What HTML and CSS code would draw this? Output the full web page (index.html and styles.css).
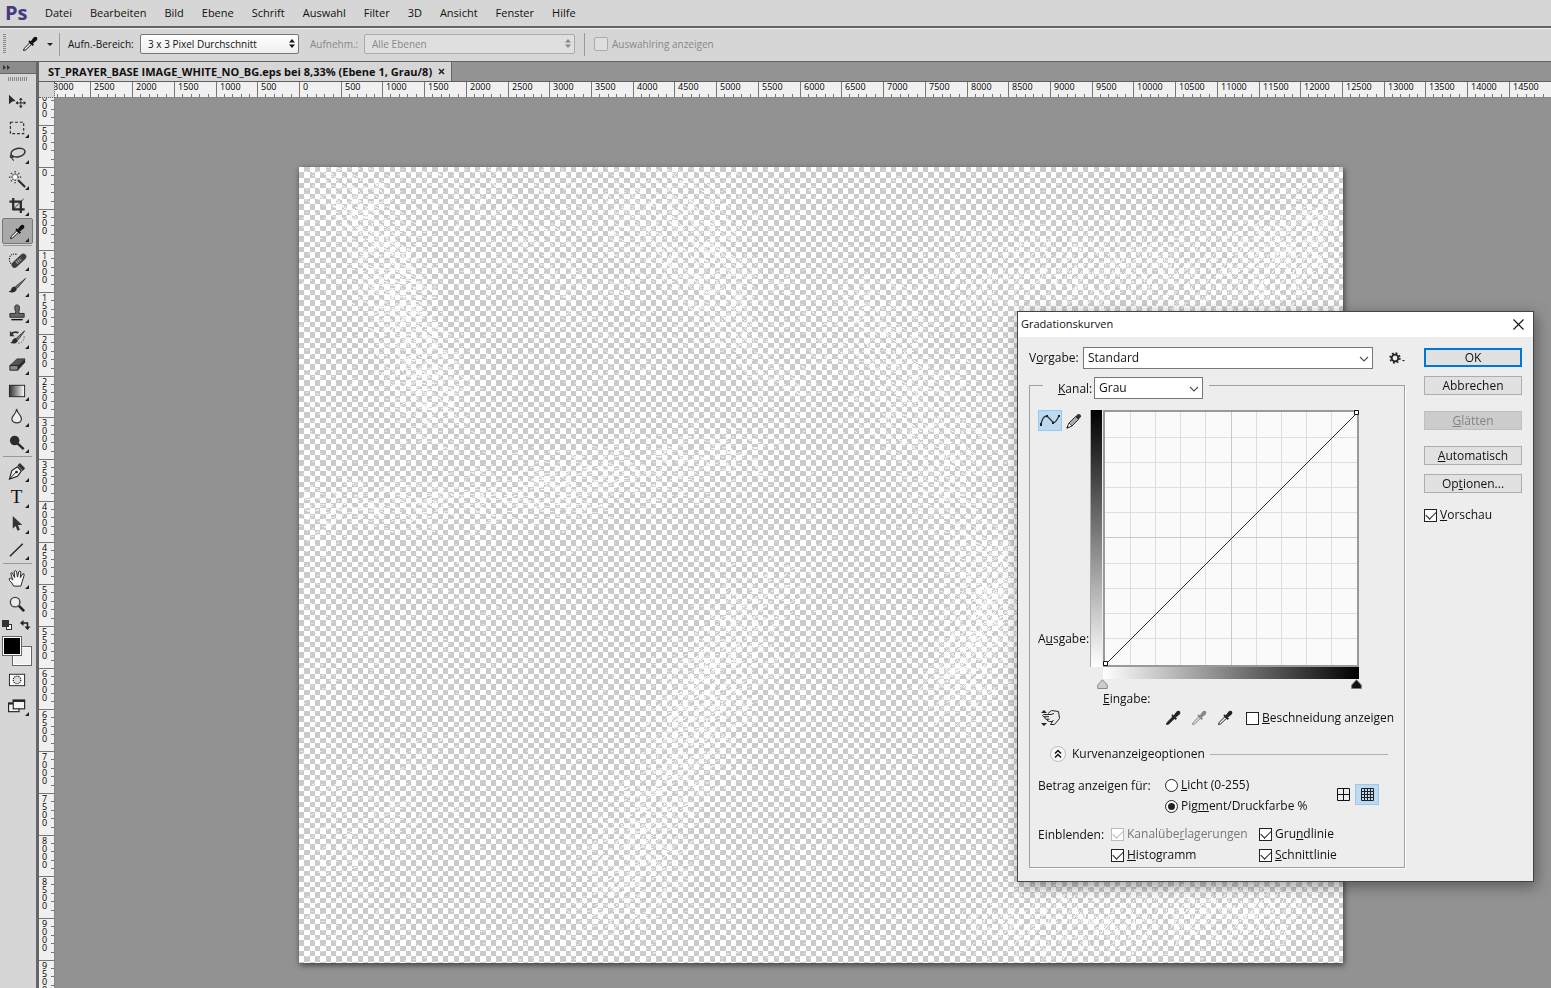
FILE: index.html
```
<!DOCTYPE html>
<html lang="de">
<head>
    <meta charset="utf-8">
    <title>ST_PRAYER_BASE IMAGE_WHITE_NO_BG.eps</title>
    <link rel="stylesheet" href="styles.css">
</head>
<body>
    <!-- Symbole, die mehrfach vorkommen -->
    <svg class="defs" width="0" height="0">
        <symbol id="pipette" viewBox="0 0 16 16">
            <path d="M1.5 14.5 L2.2 12.4 L8 6.6 L9.6 8.2 L3.7 13.9 Z" fill="var(--tube, #f4f4f4)" stroke="currentColor" stroke-width="1"/>
            <path d="M7 5 L11.3 9.3" stroke="currentColor" stroke-width="2"/>
            <path d="M8.6 5.4 L11.6 1.6 Q13.2 0.2 14.9 1.3 Q16 3 14.6 4.5 L10.8 7.6 Z" fill="currentColor"/>
        </symbol>
        <symbol id="chevron" viewBox="0 0 10 6">
            <path d="M1 1 L5 5 L9 1" fill="none" stroke="#555" stroke-width="1.2"/>
        </symbol>
        <symbol id="updown" viewBox="0 0 6 9">
            <path d="M3 0 L6 3.5 H0 Z M3 9 L0 5.5 H6 Z" fill="currentColor"/>
        </symbol>
    </svg>

    <nav class="menubar">
        <span class="logo">Ps</span>
        <a href="#">Datei</a>
        <a href="#">Bearbeiten</a>
        <a href="#">Bild</a>
        <a href="#">Ebene</a>
        <a href="#">Schrift</a>
        <a href="#">Auswahl</a>
        <a href="#">Filter</a>
        <a href="#">3D</a>
        <a href="#">Ansicht</a>
        <a href="#">Fenster</a>
        <a href="#">Hilfe</a>
    </nav>

    <div class="options">
        <span class="grip"></span>
        <button class="current-tool" aria-label="Pipette">
            <svg width="16" height="16"><use href="#pipette"/></svg>
            <svg width="6" height="3"><path d="M0 0 H6 L3 3 Z" fill="#222"/></svg>
        </button>
        <label class="option option-area">Aufn.-Bereich:
            <span class="select">
                <select><option>3 x 3 Pixel Durchschnitt</option></select>
                <svg width="6" height="9"><use href="#updown"/></svg>
            </span>
        </label>
        <label class="option option-layers disabled">Aufnehm.:
            <span class="select">
                <select disabled><option>Alle Ebenen</option></select>
                <svg width="6" height="9"><use href="#updown"/></svg>
            </span>
        </label>
        <label class="option option-ring disabled"><input type="checkbox" disabled>Auswahlring anzeigen</label>
    </div>

    <div class="main">
        <aside class="toolbox">
            <div class="toolbox-head">
                <svg width="8" height="5"><path d="M0 0 L3 2.5 L0 5 Z M4 0 L7 2.5 L4 5 Z" fill="#333"/></svg>
            </div>
            <div class="toolbox-grip"></div>
            <div class="tools">
                <button class="tool single" aria-label="Verschieben">
                    <svg viewBox="0 0 20 20"><path d="M1 3 L8 9.5 L4.5 10 L1 13 Z" fill="#2b2b2b"/><path d="M13.500 6.500 V16 M8.500 11.500 H18.500" stroke="#2b2b2b"/><path d="M13.500 6 L11.500 8.500 H15.500 Z M13.500 17 L11.500 14.500 H15.500 Z M8 11.500 L10.500 9.500 V13.500 Z M19 11.500 L16.500 9.500 V13.500 Z" fill="#2b2b2b"/></svg>
                </button>
                <button class="tool" aria-label="Auswahlrechteck">
                    <svg viewBox="0 0 20 20"><rect x="2.500" y="4.500" width="14" height="12" fill="none" stroke="#2b2b2b" stroke-width="1.200" stroke-dasharray="3 2"/></svg>
                </button>
                <button class="tool" aria-label="Lasso">
                    <svg viewBox="0 0 20 20"><ellipse cx="10.500" cy="9" rx="7.500" ry="4.500" fill="none" stroke="#333" stroke-width="1.600" transform="rotate(-12 11 9)"/><path d="M4 11 Q1 13 3.500 14.500 Q6.500 14 5 12.500 Q3.500 13 4.500 15.500 L6 17.500" fill="none" stroke="#333" stroke-width="1.200"/></svg>
                </button>
                <button class="tool" aria-label="Zauberstab">
                    <svg viewBox="0 0 20 20"><path d="M7.500 1 V5 M7.500 10 V14 M1 7.500 H5 M10 7.500 H14 M3 3 L6 6 M12 3 L9 6 M3 12 L6 9" stroke="#333" stroke-width="1.300" stroke-dasharray="1.500 1"/><circle cx="7.500" cy="7.500" r="2.700" fill="#fff" stroke="#555" stroke-dasharray="1.500 1"/><path d="M10.500 10.500 L18 18" stroke="#2b2b2b" stroke-width="2.200"/></svg>
                </button>
                <button class="tool" aria-label="Freistellen">
                    <svg viewBox="0 0 20 20"><path d="M5.500 2 V14 H17.500 M1.500 6 H13.500 V18" fill="none" stroke="#2b2b2b" stroke-width="2.400"/><path d="M6 13.500 L16.500 3" stroke="#2b2b2b"/></svg>
                </button>
                <button class="tool active" aria-label="Pipette">
                    <svg viewBox="-1 -2 19 19"><use href="#pipette" width="16" height="16"/></svg>
                </button>
                <hr>
                <button class="tool" aria-label="Bereichsreparatur">
                    <svg viewBox="0 0 20 20"><path d="M9 3.500 Q1.500 2 1.500 8.500 Q1.500 13 5 14.500" fill="none" stroke="#222" stroke-width="1.200" stroke-dasharray="1.200 1.200"/><path d="M7 14.500 L16 6" stroke="#3d3d3d" stroke-width="6.500" stroke-linecap="round"/><path d="M9 12.500 L14 8" stroke="#bbb" stroke-width="3.500" stroke-dasharray="1 1.200"/></svg>
                </button>
                <button class="tool" aria-label="Pinsel">
                    <svg viewBox="0 0 20 20"><path d="M18.500 1.500 L10 11.500 L8 10 Z" fill="#777" stroke="#222" stroke-width=".8"/><path d="M9.500 12.500 L7.500 10 Q4 10 3.500 13 Q3 15 0.500 15.500 Q7 18 9.500 12.500 Z" fill="#2b2b2b"/></svg>
                </button>
                <button class="tool" aria-label="Stempel">
                    <svg viewBox="0 0 20 20"><path d="M8 9 Q5.500 2 9.500 2 Q13.500 2 11.500 9 V11 H17 V15 H2 V11 H8 Z" fill="#666" stroke="#2b2b2b"/><path d="M3.500 17.500 H15.500" stroke="#111" stroke-width="1.500"/></svg>
                </button>
                <button class="tool" aria-label="Protokollpinsel">
                    <svg viewBox="0 0 20 20"><path d="M17.500 2 L11 11 L9 9.500 Z" fill="#888" stroke="#222" stroke-width=".8"/><path d="M10.500 12 L8.500 9.500 Q5 10 4.500 12.500 Q4 14 2 14.500 Q8 17 10.500 12 Z" fill="#2b2b2b"/><path d="M3 5 Q7 2 11 4" fill="none" stroke="#333" stroke-width="1.800"/><path d="M2 2 V7.500 H7 Z" fill="#333"/><path d="M17 8 Q17 14 11 15" fill="none" stroke="#222" stroke-dasharray="1 2"/></svg>
                </button>
                <button class="tool" aria-label="Radiergummi">
                    <svg viewBox="0 0 20 20"><path d="M2 11 L9.500 4 H18 L10.500 11 Z" fill="#555" stroke="#222" stroke-width=".6"/><path d="M10.500 11 L18 4 V8 L10.500 16 Z" fill="#2b2b2b"/><path d="M2 11 H10.500 V16 H2 Z" fill="#888" stroke="#222"/></svg>
                </button>
                <button class="tool" aria-label="Verlauf">
                    <svg viewBox="0 0 20 20"><defs><linearGradient id="verlauf"><stop offset="0" stop-color="#333"/><stop offset="1" stop-color="#fff"/></linearGradient></defs><rect x="1.500" y="4.500" width="16" height="12" fill="url(#verlauf)" stroke="#222"/></svg>
                </button>
                <button class="tool" aria-label="Weichzeichner">
                    <svg viewBox="0 0 20 20"><path d="M9 2 Q9 5 6 8.500 Q2.500 13 5.500 15.500 Q9.500 18 13 15.500 Q15.500 12.500 12.500 8.500 Q9.500 5 9 2 Z" fill="#eee" stroke="#333" stroke-width="1.200"/></svg>
                </button>
                <button class="tool" aria-label="Abwedler">
                    <svg viewBox="0 0 20 20"><circle cx="7" cy="8" r="5" fill="#2b2b2b"/><path d="M10 11 L16.500 17" stroke="#2b2b2b" stroke-width="2.600"/></svg>
                </button>
                <hr>
                <button class="tool" aria-label="Zeichenstift">
                    <svg viewBox="0 0 20 20"><path d="M1.500 18 L4 9 L10 5 L14 9.500 L10 15 Z" fill="#f0f0f0" stroke="#222" stroke-width="1.200"/><path d="M2 17.500 L8.500 10.500" stroke="#222"/><circle cx="9" cy="10.500" r="1.400" fill="#222"/><path d="M10 3.500 L12.500 1 L18 6.500 L15.500 9.500 Z" fill="#333"/></svg>
                </button>
                <button class="tool letter" aria-label="Text">T</button>
                <button class="tool" aria-label="Pfadauswahl">
                    <svg viewBox="0 0 20 20"><path d="M5 2 V15.500 L8 12.500 L10 17.500 L12.500 16.500 L10.500 11.500 H15 Z" fill="#333"/></svg>
                </button>
                <button class="tool" aria-label="Linie">
                    <svg viewBox="0 0 20 20"><path d="M2 17 L15.500 4" stroke="#222" stroke-width="1.500"/></svg>
                </button>
                <hr>
                <button class="tool" aria-label="Hand">
                    <svg viewBox="0 0 20 20"><path d="M6 18 Q4.500 14.500 1.500 12 Q.5 9.500 2.500 9.500 L5 11.500 L3 5 Q3 3.500 4.500 4 L7 9 L6.500 2.500 Q7.500 1 9 2.500 L10 8.500 L11.500 2.500 Q12.500 1.500 13.500 3 L13 9 L15.500 5 Q17.500 4.500 17 6.500 L15 13 L13.500 18 Z" fill="#f6f6f6" stroke="#222"/></svg>
                </button>
                <button class="tool single" aria-label="Zoom">
                    <svg viewBox="0 0 20 20"><circle cx="7.500" cy="7.500" r="5" fill="#ececec" stroke="#444" stroke-width="1.500"/><path d="M11.500 11.500 L17 17" stroke="#222" stroke-width="2.800"/></svg>
                </button>
            </div>
            <div class="swap">
                <svg width="10" height="10"><rect x="4.500" y="4.500" width="5" height="5" fill="#fff" stroke="#333"/><rect x="0" y="0" width="7" height="7" fill="#333"/></svg>
                <svg width="11" height="10"><path d="M2 3 H7.500 V8" fill="none" stroke="#222" stroke-width="1.500"/><path d="M3.500 0 V6 L0 3 Z M4.500 6.500 H10.500 L7.500 10 Z" fill="#222"/></svg>
            </div>
            <div class="swatches"><span class="swatch back"></span><span class="swatch front"></span></div>
            <div class="tools">
                <button class="tool single" aria-label="Maskierungsmodus">
                    <svg viewBox="0 0 20 20"><rect x="1.500" y="4.500" width="16" height="12" fill="#fff" stroke="#222"/><circle cx="9.500" cy="10.500" r="4" fill="#ddd" stroke="#111" stroke-width="1.200" stroke-dasharray="1.200 1"/></svg>
                </button>
                <button class="tool" aria-label="Bildschirmmodus">
                    <svg viewBox="0 0 20 20"><rect x=".6" y="7.500" width="11" height="9" fill="#f4f4f4" stroke="#222" stroke-width="1.200"/><path d="M0 8 H6" stroke="#222" stroke-width="2"/><rect x="5.500" y="4.500" width="12" height="9" fill="#f4f4f4" stroke="#222" stroke-width="1.200"/><path d="M5 5 H18" stroke="#222" stroke-width="2.500"/></svg>
                </button>
            </div>
        </aside>

        <section class="document">
            <div class="tabs">
                <div class="tab">ST_PRAYER_BASE IMAGE_WHITE_NO_BG.eps bei 8,33% (Ebene 1, Grau/8)
                    <button aria-label="Schließen"><svg width="7" height="7"><path d="M1 1 L6 6 M6 1 L1 6" stroke="#222" stroke-width="1.500"/></svg></button>
                </div>
            </div>
            <div class="view">
                <div class="ruler-corner"></div>
                <div class="ruler ruler-x" id="rulerX"></div>
                <div class="ruler ruler-y" id="rulerY"></div>
                <div class="pasteboard">
                    <canvas class="artboard" id="artboard" width="1044" height="796"></canvas>
                </div>
            </div>
        </section>
    </div>

    <form class="dialog" role="dialog" aria-label="Gradationskurven">
        <header class="dialog-title">Gradationskurven
            <button type="button" aria-label="Schließen"><svg width="11" height="11"><path d="M.5 .5 L10.500 10.500 M10.500 .5 L.5 10.500" stroke="#111" stroke-width="1.100"/></svg></button>
        </header>
        <div class="dialog-body">
            <div class="settings">
                <div class="preset">
                    <label for="preset">V<u>o</u>rgabe:</label>
                    <span class="combo">
                        <select id="preset"><option>Standard</option></select>
                        <svg width="10" height="6"><use href="#chevron"/></svg>
                    </span>
                    <button type="button" class="gear" aria-label="Vorgabenoptionen">
                        <svg width="16" height="12"><circle cx="6" cy="6" r="3.300" fill="none" stroke="#222" stroke-width="1.800"/><circle cx="6" cy="6" r="4.900" fill="none" stroke="#222" stroke-width="1.600" stroke-dasharray="1.900 1.950"/><path d="M13 8 H16 L14.500 9.500 Z" fill="#222"/></svg>
                    </button>
                </div>
                <fieldset>
                    <legend>
                        <label for="channel"><u>K</u>anal:</label>
                        <span class="combo">
                            <select id="channel"><option>Grau</option></select>
                            <svg width="10" height="6"><use href="#chevron"/></svg>
                        </span>
                    </legend>
                    <div class="curve">
                        <div class="curve-side">
                            <div class="curve-modes">
                                <button type="button" class="toggle on" aria-label="Kurve">
                                    <svg width="22" height="18"><path d="M2 12 C4 4 7 2 11 7 S16 12 20 4" fill="none" stroke="#333" stroke-width="1.300"/><path d="M1 11 h2 v3 h-2 Z M7 3 h2 v2 h-2 Z M13 10 h2 v2 h-2 Z M19 3 h2 v2 h-2 Z" fill="#222"/></svg>
                                </button>
                                <button type="button" class="plain" aria-label="Stift">
                                    <svg width="16" height="16"><path d="M1 15 L3 10 L9.500 3.500 L12.500 6.500 L6 13 Z" fill="#aaa" stroke="#333"/><path d="M1 15 L3 10 L6 13 Z" fill="#fff" stroke="#333" stroke-width=".8"/><path d="M.5 15.500 L1.500 13 L3 14.500 Z" fill="#111"/><path d="M9.500 3.500 L12 1 Q15 .5 15.200 3.500 L12.500 6.500 Z" fill="#333"/></svg>
                                </button>
                            </div>
                            <span>A<u>u</u>sgabe:</span>
                        </div>
                        <div class="ramp ramp-y"></div>
                        <svg class="graph" width="256" height="257">
                            <rect x="1" y="1" width="254" height="255" fill="#fafafa" stroke="#999" stroke-width="2"/>
                            <path d="M27.500 2 V255 M52.500 2 V255 M77.500 2 V255 M102.500 2 V255 M153.500 2 V255 M178.500 2 V255 M203.500 2 V255 M228.500 2 V255 M2 27.500 H254 M2 52.500 H254 M2 77.500 H254 M2 102.500 H254 M2 153.500 H254 M2 178.500 H254 M2 203.500 H254 M2 228.500 H254" stroke="#dedede"/>
                            <path d="M128.500 2 V255 M2 127.500 H254" stroke="#c8c8c8"/>
                            <path d="M3 254 L254 3" stroke="#111" stroke-width=".9"/>
                            <path d="M.5 251.500 h4 v4 h-4 Z M251.500 .5 h4 v4 h-4 Z" fill="#fff" stroke="#111"/>
                        </svg>
                        <div class="ramp ramp-x"></div>
                        <div class="sliders">
                            <svg width="11" height="11"><path d="M5.500 .8 L10.300 6 V9.500 H.7 V6 Z" fill="#ccc" stroke="#888"/></svg>
                            <svg width="11" height="11"><path d="M5.500 .8 L10.300 6 V9.500 H.7 V6 Z" fill="#111" stroke="#777"/></svg>
                        </div>
                        <span class="input-label"><u>E</u>ingabe:</span>
                    </div>

                    <div class="droppers">
                        <button type="button" class="plain hand" aria-label="Im Bild anpassen">
                            <svg width="20" height="18"><path d="M3 1 L6 4 H0 Z M3 17 L6 14 H0 Z" fill="#222"/><path d="M10 5.500 H2.500 Q.8 6.500 2.500 7.700 H8 M4 7.700 Q3 9.500 5 10.200 H8.500 M6 10.200 Q6 12.500 8.500 12.500 H11.500 M7 4.500 L10.500 1.500 L17.500 2.500 L18.500 9.500 L13.500 15.500 H9.500 L12.500 11 M10 5.500 L13 4.500" fill="none" stroke="#222" stroke-width="1"/></svg>
                        </button>
                        <button type="button" class="plain dropper black" aria-label="Schwarzpunkt"><svg width="16" height="16"><use href="#pipette"/></svg></button>
                        <button type="button" class="plain dropper gray" aria-label="Mitteltöne"><svg width="16" height="16"><use href="#pipette"/></svg></button>
                        <button type="button" class="plain dropper" aria-label="Weißpunkt"><svg width="16" height="16"><use href="#pipette"/></svg></button>
                        <label class="check"><input type="checkbox"><span><u>B</u>eschneidung anzeigen</span></label>
                    </div>

                    <div class="expander">
                        <button type="button" class="plain" aria-label="Einklappen">
                            <svg width="18" height="18"><circle cx="9" cy="9" r="7.500" fill="#f7f7f7" stroke="#bbb"/><path d="M6 8.500 L9 5.500 L12 8.500 M6 12.500 L9 9.500 L12 12.500" fill="none" stroke="#111" stroke-width="1.500"/></svg>
                        </button>
                        <span>Kurvenanzeigeoptionen</span>
                    </div>

                    <div class="amount">
                        <span>Betrag anzeigen für:</span>
                        <div class="stack">
                            <label class="check"><input type="radio" name="amount"><span><u>L</u>icht (0-255)</span></label>
                            <label class="check"><input type="radio" name="amount" checked><span>Pig<u>m</u>ent/Druckfarbe %</span></label>
                        </div>
                        <div class="grids">
                            <button type="button" class="toggle" aria-label="Grobes Raster"><svg width="13" height="13"><path d="M.5 .5 H12.500 V12.500 H.5 Z M6.500 0 V13 M0 6.500 H13" fill="none" stroke="#111"/></svg></button>
                            <button type="button" class="toggle on" aria-label="Feines Raster"><svg width="13" height="13"><path d="M.5 .5 H12.500 V12.500 H.5 Z M3.500 0 V13 M6.500 0 V13 M9.500 0 V13 M0 3.500 H13 M0 6.500 H13 M0 9.500 H13" fill="none" stroke="#222"/></svg></button>
                        </div>
                    </div>

                    <div class="show">
                        <span>Einblenden:</span>
                        <div class="stack">
                            <label class="check disabled"><input type="checkbox" checked disabled><span>Kanalübe<u>r</u>lagerungen</span></label>
                            <label class="check"><input type="checkbox" checked><span><u>H</u>istogramm</span></label>
                        </div>
                        <div class="stack">
                            <label class="check"><input type="checkbox" checked><span>Gru<u>n</u>dlinie</span></label>
                            <label class="check"><input type="checkbox" checked><span><u>S</u>chnittlinie</span></label>
                        </div>
                    </div>
                </fieldset>
            </div>

            <div class="actions">
                <button type="button" class="btn default">OK</button>
                <button type="button" class="btn">Abbrechen</button>
                <button type="button" class="btn spaced" disabled><u>G</u>lätten</button>
                <button type="button" class="btn spaced"><u>A</u>utomatisch</button>
                <button type="button" class="btn">Op<u>t</u>ionen...</button>
                <label class="check"><input type="checkbox" checked><span><u>V</u>orschau</span></label>
            </div>
        </div>
    </form>

    <script src="script.js"></script>
</body>
</html>
```
FILE: styles.css
```
* {
    box-sizing: border-box;
}

body {
    margin: 0;
    height: 100vh;
    display: flex;
    flex-direction: column;
    overflow: hidden;
    position: relative;
    background-color: #d6d6d6;
    color: #111;
    font-family: "Open Sans", "Noto Sans", sans-serif;
    font-size: 12px;
    line-height: 16px;
}

button,
select,
input {
    font: inherit;
    color: inherit;
    margin: 0;
}

button {
    padding: 0;
    border: none;
    background: none;
}

svg {
    display: block;
    flex: none;
}

.defs {
    position: absolute;
}

/* Menü */
.menubar {
    display: flex;
    align-items: center;
    gap: 18px;
    height: 28px;
    padding-left: 5px;
    border-bottom: 2px solid #646464;
    font-size: 11px;
}

.menubar a {
    color: #111;
    text-decoration: none;
}

.logo {
    width: 22px;
    color: #433a82;
    font-size: 20px;
    font-weight: bold;
}

/* Optionsleiste */
.options {
    display: flex;
    align-items: center;
    height: 34px;
    padding: 0 0 2px 3px;
    border-top: 1px solid #f0f0f0;
    border-bottom: 1px solid #646464;
    font-size: 10px;
    color: #111;
}

.grip {
    width: 3px;
    height: 20px;
    background: repeating-linear-gradient(#888 0 1px, transparent 1px 2px);
}

.current-tool {
    display: flex;
    align-items: center;
    justify-content: flex-end;
    gap: 9px;
    width: 54px;
    height: 23px;
    padding-right: 6px;
    border-right: 1px solid #999;
}

.option {
    display: flex;
    align-items: center;
    justify-content: space-between;
}

.option-area {
    width: 231px;
    margin-left: 8px;
}

.option-layers {
    width: 265px;
    margin-left: 11px;
}

.option-ring {
    height: 23px;
    gap: 4px;
    margin-left: 9px;
    padding-left: 9px;
    border-left: 1px solid #999;
}

.option .select {
    position: relative;
}

.option-area .select {
    width: 159px;
}

.option-layers .select {
    width: 211px;
}

.option select {
    appearance: none;
    display: block;
    width: 100%;
    height: 20px;
    padding: 0 7px;
    border: 1px solid #777;
    border-radius: 2px;
    background: linear-gradient(#fff, #eee);
}

.option .select svg {
    position: absolute;
    top: 5px;
    right: 4px;
}

.option input {
    appearance: none;
    width: 14px;
    height: 14px;
    border: 1px solid #aaa;
    border-radius: 2px;
    background-color: #dedede;
}

.option.disabled {
    color: #888;
}

.option select:disabled {
    border-color: #aaa;
    background: #dfdfdf;
    color: #888;
    opacity: 1;
}

.main {
    flex: 1;
    display: flex;
    min-height: 0;
}

/* Werkzeuge */
.toolbox {
    flex: none;
    width: 39px;
    border-right: 3px solid #666;
}

.toolbox-head {
    height: 12px;
    padding: 3px;
    background-color: #8c8c8c;
    border-bottom: 1px solid #666;
}

.toolbox-grip {
    width: 20px;
    height: 4px;
    margin: 3px 8px 7px;
    background: repeating-linear-gradient(90deg, #888 0 1px, transparent 1px 2px);
}

.tools {
    display: flex;
    flex-direction: column;
}

.tools hr {
    width: 29px;
    height: 1px;
    margin: 1px 3px;
    border: none;
    background-color: #999;
}

.tool {
    position: relative;
    width: 31px;
    height: 26px;
    margin-left: 2px;
    padding: 3px 5px;
    border: 1px solid transparent;
    border-radius: 2px;
}

.tool svg {
    width: 19px;
    height: 19px;
}

.tool::after {
    content: "";
    position: absolute;
    right: 3px;
    bottom: 1px;
    border: 2px solid;
    border-color: transparent #222 #222 transparent;
}

.tool.single::after {
    display: none;
}

.tool.active {
    background-color: #a9a9a9;
    border-color: #777;
}

.tool.letter {
    font-family: "Liberation Serif", serif;
    font-size: 19px;
    line-height: 16px;
    padding-right: 7px;
    text-align: center;
}

.swap {
    display: flex;
    justify-content: space-between;
    width: 29px;
    height: 19px;
    margin-left: 2px;
    padding-top: 3px;
}

.swatches {
    position: relative;
    height: 30px;
}

.swatch {
    position: absolute;
    width: 20px;
    height: 20px;
    border: 1px solid #666;
    background-color: #f0f0f0;
    box-shadow: inset 0 0 0 1px #fff;
}

.swatch.front {
    top: 0;
    left: 2px;
    background-color: #000;
}

.swatch.back {
    top: 10px;
    left: 12px;
}

/* Dokument */
.document {
    flex: 1;
    min-width: 0;
    display: flex;
    flex-direction: column;
}

.tabs {
    display: flex;
    height: 20px;
    background-color: #939393;
    border-bottom: 1px solid #5f5f5f;
}

.tab {
    display: flex;
    align-items: center;
    gap: 6px;
    padding: 0 6px 0 9px;
    background-color: #d6d6d6;
    border-right: 1px solid #666;
    font-size: 11px;
    font-weight: bold;
    white-space: nowrap;
}

.view {
    flex: 1;
    min-height: 0;
    display: grid;
    grid-template-columns: 16px minmax(0, 1fr);
    grid-template-rows: 16px minmax(0, 1fr);
}

.ruler-corner {
    background-color: #d6d6d6;
    border-right: 1px dotted #666;
    border-bottom: 1px dotted #666;
}

.ruler {
    display: flex;
    overflow: hidden;
    background-color: #f0f0f0;
    color: #000;
    font-size: 9px;
    line-height: 9px;
}

.ruler-x {
    border-bottom: 1px solid #888;
}

.ruler-y {
    flex-direction: column;
    border-right: 1px solid #888;
}

.cell {
    position: relative;
    flex: none;
    display: flex;
    align-items: flex-end;
}

.ruler-x .cell {
    border-left: 1px solid #777;
}

.ruler-y .cell {
    flex-direction: column;
    border-top: 1px solid #777;
}

.cell i {
    flex: 1;
}

.ruler-x i {
    height: 3px;
}

.ruler-y i {
    width: 3px;
}

.ruler-x i + i {
    border-left: 1px solid #777;
}

.ruler-y i + i {
    border-top: 1px solid #777;
}

.cell span {
    position: absolute;
}

.ruler-x span {
    top: 0;
    left: 3px;
}

.ruler-y span {
    top: 1px;
    left: 3px;
    width: 5px;
    line-height: 8px;
    word-break: break-all;
}

.pasteboard {
    position: relative;
    overflow: hidden;
    background-color: #929292;
}

.artboard {
    position: absolute;
    top: 69px;
    left: 244px;
    box-shadow: 1px 2px 6px rgba(0, 0, 0, 0.6);
}

/* Dialog */
.dialog {
    position: absolute;
    top: 311px;
    left: 1017px;
    width: 517px;
    border: 1px solid #444;
    background-color: #ededed;
    box-shadow: 2px 4px 14px rgba(0, 0, 0, 0.4);
}

.dialog-title {
    display: flex;
    align-items: center;
    justify-content: space-between;
    height: 25px;
    padding: 0 9px 1px 3px;
    background-color: #fff;
    font-size: 11px;
}

.dialog-body {
    display: flex;
    justify-content: space-between;
    padding: 10px 11px 13px;
}

.settings {
    width: 376px;
}

.preset {
    display: flex;
    align-items: center;
}

.preset label {
    width: 55px;
}

.preset .combo {
    width: 290px;
    margin-right: 16px;
}

.combo {
    position: relative;
    flex: none;
}

.combo select {
    appearance: none;
    display: block;
    width: 100%;
    height: 22px;
    padding: 0 4px;
    border: 1px solid #777;
    border-radius: 0;
    background-color: #fff;
}

.combo svg {
    position: absolute;
    top: 9px;
    right: 4px;
}

fieldset {
    min-width: 0;
    margin: 8px 0 0;
    padding: 17px 8px 4px;
    border: 1px solid #a0a0a0;
    box-shadow: 1px 1px #fff;
}

legend {
    display: flex;
    width: 166px;
    height: 16px;
    margin-left: 5px;
    padding: 0;
}

legend label {
    width: 51px;
    padding: 4px 0 0 15px;
}

legend .combo {
    width: 109px;
}

legend select {
    height: 25px;
    padding: 2px 6px 0;
}

.curve {
    display: grid;
    grid-template-columns: 52px 13px 256px;
    grid-template-rows: 257px 12px 11px 18px;
}

.curve-side {
    display: flex;
    flex-direction: column;
    justify-content: space-between;
    padding-bottom: 20px;
}

.curve-modes {
    display: flex;
    gap: 4px;
}

.toggle {
    display: flex;
    align-items: center;
    justify-content: center;
    width: 24px;
    height: 21px;
    border: 1px solid transparent;
}

.toggle.on {
    border-color: #99c9ef;
    background-color: #bddaf1;
}

.ramp-y {
    margin-right: 1px;
    border-left: 1px solid #aaa;
    background: linear-gradient(#000, #fff);
}

.ramp-x {
    grid-column: 3;
    background: linear-gradient(90deg, #fff, #000);
}

.sliders {
    grid-column: 3;
    display: flex;
    justify-content: space-between;
    margin: 0 -3px 0 -6px;
}

.input-label {
    grid-column: 3;
    padding-top: 1px;
}

.droppers {
    display: flex;
    align-items: center;
    gap: 10px;
    height: 20px;
    padding-left: 3px;
}

.hand {
    margin-right: 94px;
}

.dropper {
    color: #222;
}

.dropper.black {
    --tube: #222;
}

.dropper.gray {
    --tube: #ddd;
    color: #888;
}

.droppers .check {
    margin-left: 3px;
}

.check {
    display: flex;
    align-items: center;
    gap: 3px;
    height: 16px;
    white-space: nowrap;
}

.check input {
    appearance: none;
    flex: none;
    position: relative;
    width: 13px;
    height: 13px;
    border: 1px solid #222;
    background-color: #fff;
}

.check input[type="checkbox"]:checked::after {
    content: "";
    position: absolute;
    top: 1px;
    left: 1px;
    width: 9px;
    height: 5px;
    border-left: 1px solid #222;
    border-bottom: 1px solid #222;
    transform: rotate(-45deg);
}

.check input[type="radio"] {
    border-radius: 50%;
}

.check input[type="radio"]:checked::after {
    content: "";
    position: absolute;
    top: 2px;
    left: 2px;
    width: 7px;
    height: 7px;
    border-radius: 50%;
    background-color: #222;
}

.check.disabled {
    color: #777;
}

.check input:disabled,
.check input[type="checkbox"]:disabled:checked::after {
    border-color: #bbb;
}

.expander {
    display: flex;
    align-items: center;
    gap: 5px;
    margin-top: 17px;
    padding: 0 8px 0 11px;
}

.expander::after {
    content: "";
    flex: 1;
    height: 1px;
    background-color: #b0b0b0;
}

.amount,
.show {
    display: flex;
}

.amount {
    margin-top: 14px;
}

.amount > span {
    width: 127px;
    padding-top: 1px;
}

.stack {
    display: flex;
    flex-direction: column;
    gap: 5px;
}

.amount .stack {
    width: 166px;
}

.grids {
    display: flex;
    padding-top: 7px;
}

.show {
    margin-top: 12px;
}

.show > span {
    flex: none;
    width: 73px;
    padding-top: 1px;
}

.show .stack {
    flex: none;
    width: 148px;
}

.show .stack:last-child {
    width: auto;
}

.actions {
    display: flex;
    flex-direction: column;
    width: 98px;
    padding-top: 1px;
}

.btn {
    height: 19px;
    margin-bottom: 9px;
    border: 1px solid #adadad;
    background-color: #e1e1e1;
    line-height: 17px;
}

.btn.default {
    border: 2px solid #0078d7;
    line-height: 15px;
}

.btn.spaced {
    margin-top: 7px;
}

.btn:disabled {
    border-color: #bfbfbf;
    background-color: #ccc;
    color: #838383;
}

.actions .check {
    margin-top: 5px;
}
```
FILE: script.js
```
// Abstand zwischen zwei Hauptstrichen der Lineale (500 Pixel im Dokument)
const unit = 41.72;

function buildRuler(id, first, count, offset, side) {
    const ruler = document.getElementById(id);
    for (let i = 0; i < count; i++) {
        const n = first + i;
        const start = Math.round(offset + n * unit);
        const end = Math.round(offset + (n + 1) * unit);
        const cell = document.createElement("div");
        cell.className = "cell";
        cell.style[side] = end - start + "px";
        if (i === 0) {
            cell.style[side === "width" ? "marginLeft" : "marginTop"] = start + "px";
        }
        cell.innerHTML = "<i></i><i></i><i></i><i></i><i></i><span>" + Math.abs(n * 500) + "</span>";
        ruler.appendChild(cell);
    }
}

buildRuler("rulerX", -6, 37, 244, "width");
buildRuler("rulerY", -2, 23, 69, "height");

// Transparenzmuster
const canvas = document.getElementById("artboard");
const ctx = canvas.getContext("2d");
const size = 16 / 3;
ctx.fillStyle = "#fff";
ctx.fillRect(0, 0, canvas.width, canvas.height);
ctx.fillStyle = "#cbcbcb";
for (let row = 0; row * size < canvas.height; row++) {
    for (let col = 0; col * size < canvas.width; col++) {
        if ((row + col) % 2 === 1) {
            const x = Math.round(col * size);
            const y = Math.round(row * size);
            ctx.fillRect(x, y, Math.round((col + 1) * size) - x, Math.round((row + 1) * size) - y);
        }
    }
}

// Weiße Schraffur: x1, y1, x2, y2, Breite, Neigung der Striche, Anzahl
const bands = [
    [40, 0, 100, 120, 45, 0.5, 1000],
    [90, 110, 140, 250, 50, 0.3, 1400],
    [150, 0, 330, 150, 80, 0.6, 800],
    [310, 20, 490, 230, 45, 0.8, 900],
    [370, 0, 450, 140, 60, 0.8, 1000],
    [0, 345, 280, 325, 35, 0.1, 1000],
    [230, 320, 460, 285, 45, 0.1, 1000],
    [550, 130, 660, 300, 70, 0.7, 1500],
    [640, 300, 690, 400, 60, 0.4, 600],
    [470, 410, 400, 540, 60, -0.6, 1000],
    [420, 500, 310, 750, 60, -0.6, 2200],
    [700, 400, 650, 540, 50, -0.8, 1500],
    [30, 700, 130, 600, 80, -0.6, 500],
    [640, 110, 1040, 90, 60, -1.5, 2200],
    [960, 120, 1040, 20, 60, -0.8, 700],
    [680, 760, 1000, 740, 45, -1.5, 1800]
];

let seed = 7;
function random() {
    seed = (seed * 16807) % 2147483647;
    return seed / 2147483647;
}

function stroke(x, y, slope) {
    const length = 2 + Math.round(random() * 3);
    for (let i = 0; i < length; i++) {
        if (Math.abs(slope) > 1) {
            ctx.fillRect(Math.round(x + i / slope), Math.round(y + i), 1, 1);
        } else {
            ctx.fillRect(Math.round(x + i), Math.round(y + i * slope), 1, 1);
        }
    }
}

function spread(width) {
    return (random() + random() - 1) * width;
}

ctx.fillStyle = "rgba(255, 255, 255, 0.6)";
bands.forEach(([x1, y1, x2, y2, width, slope, amount]) => {
    for (let i = 0; i < amount; i++) {
        const t = random();
        stroke(x1 + (x2 - x1) * t + spread(width), y1 + (y2 - y1) * t + spread(width), slope);
    }
});

// Feine Körnung über dem ganzen Bild
ctx.fillStyle = "rgba(255, 255, 255, 0.5)";
for (let i = 0; i < 18000; i++) {
    ctx.fillRect(Math.round(random() * canvas.width), Math.round(random() * canvas.height), 2, 1);
}
```
